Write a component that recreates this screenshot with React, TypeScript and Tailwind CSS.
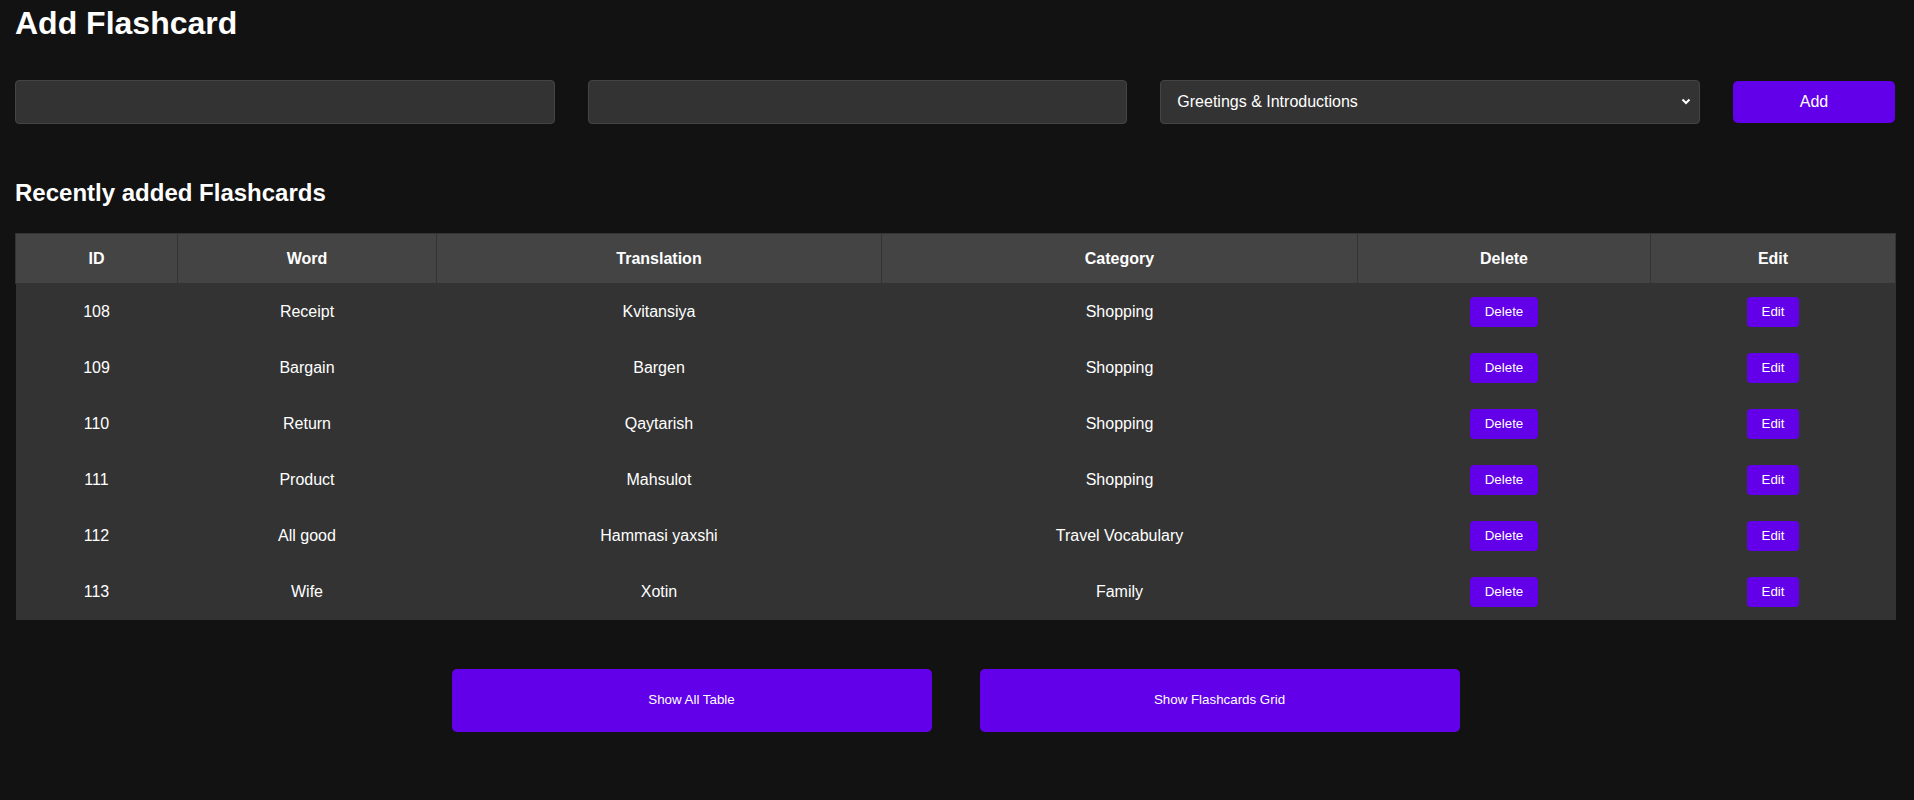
import React from "react";

const rows = [
  { id: 108, word: "Receipt", tr: "Kvitansiya", cat: "Shopping" },
  { id: 109, word: "Bargain", tr: "Bargen", cat: "Shopping" },
  { id: 110, word: "Return", tr: "Qaytarish", cat: "Shopping" },
  { id: 111, word: "Product", tr: "Mahsulot", cat: "Shopping" },
  { id: 112, word: "All good", tr: "Hammasi yaxshi", cat: "Travel Vocabulary" },
  { id: 113, word: "Wife", tr: "Xotin", cat: "Family" },
];

export default function App() {
  return (
    <div
      className="min-h-[800px] w-full bg-[#121212] text-white pl-[15px] pr-[19px] pt-[5px]"
      style={{ fontFamily: '"Liberation Sans", Arial, sans-serif' }}
    >
      <h1 className="text-[32px] font-bold leading-[37px] m-0">Add Flashcard</h1>

      <div className="mt-[38px] grid grid-cols-[1fr_1fr_1fr_162px] items-center gap-[33px] h-[44px]">
        <input className="w-full min-w-0 h-[44px] rounded-[4px] border border-[#444] bg-[#333] px-4 text-[16px] text-white outline-none" />
        <input className="w-full min-w-0 h-[44px] rounded-[4px] border border-[#444] bg-[#333] px-4 text-[16px] text-white outline-none" />
        <div className="relative min-w-0">
          <select className="w-full h-[44px] appearance-none rounded-[4px] border border-[#444] bg-[#333] pl-[16px] pr-8 text-[16px] text-white outline-none">
            <option>Greetings &amp; Introductions</option>
          </select>
          <svg
            className="pointer-events-none absolute right-[9px] top-[18px]"
            width="10"
            height="7"
            viewBox="0 0 10 7"
          >
            <path d="M1.5 1.5 L5 5 L8.5 1.5" stroke="white" strokeWidth="2" fill="none" />
          </svg>
        </div>
        <button className="w-[162px] h-[42px] rounded-[5px] bg-[#6200ea] text-[16px] text-white">
          Add
        </button>
      </div>

      <h2 className="mt-[55px] text-[24px] font-bold leading-[28px]">Recently added Flashcards</h2>

      <table className="mt-[26px] w-full border-collapse table-fixed text-[16px]">
        <colgroup>
          <col className="w-[162px]" />
          <col className="w-[259px]" />
          <col className="w-[445px]" />
          <col className="w-[476px]" />
          <col className="w-[293px]" />
          <col className="w-[245px]" />
        </colgroup>
        <thead>
          <tr className="h-[50px] bg-[#444]">
            {["ID", "Word", "Translation", "Category", "Delete", "Edit"].map((h) => (
              <th key={h} className="border border-[#333] font-bold text-center">
                {h}
              </th>
            ))}
          </tr>
        </thead>
        <tbody>
          {rows.map((r) => (
            <tr key={r.id} className="h-[56px] bg-[#333] text-center">
              <td>{r.id}</td>
              <td>{r.word}</td>
              <td>{r.tr}</td>
              <td>{r.cat}</td>
              <td>
                <button className="h-[30px] px-[15px] rounded-[4px] bg-[#6200ea] text-[13.33px] text-white">
                  Delete
                </button>
              </td>
              <td>
                <button className="h-[30px] px-[15px] rounded-[4px] bg-[#6200ea] text-[13.33px] text-white">
                  Edit
                </button>
              </td>
            </tr>
          ))}
        </tbody>
      </table>

      <div className="mt-[49px] flex justify-center gap-[48px] pl-[1px]">
        <button className="w-[480px] h-[63px] rounded-[5px] bg-[#6200ea] text-[13.33px] text-white">
          Show All Table
        </button>
        <button className="w-[480px] h-[63px] rounded-[5px] bg-[#6200ea] text-[13.33px] text-white">
          Show Flashcards Grid
        </button>
      </div>
    </div>
  );
}
